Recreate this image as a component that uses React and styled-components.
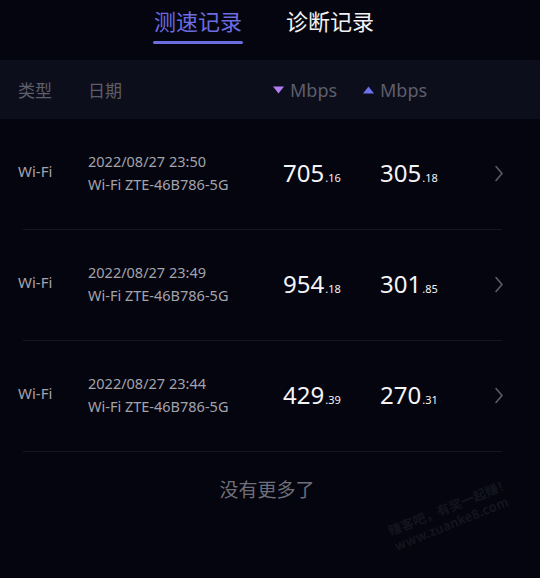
import React from 'react';
import styled, { createGlobalStyle } from 'styled-components';

const Global = createGlobalStyle`
  html, body { margin: 0; padding: 0; background: #05050f; }
  body { font-family: "Noto Sans", "Noto Sans CJK SC", sans-serif; }
`;

const Page = styled.div`
  position: relative;
  width: 540px;
  height: 578px;
  overflow: hidden;
  background: #05050f;
`;

const Tabs = styled.div`
  height: 60px;
  display: flex;
  justify-content: center;
  gap: 44px;
  padding-right: 12px;
`;

const Tab = styled.div`
  position: relative;
  padding-top: 4px;
  font-size: 22px;
  line-height: 32px;
  color: ${p => (p.active ? '#6a6ce0' : '#f2f2f5')};
  font-family: "Noto Sans CJK SC", sans-serif;
  &::after {
    content: '';
    display: ${p => (p.active ? 'block' : 'none')};
    position: absolute;
    left: -1px;
    right: -1px;
    top: 41px;
    height: 3px;
    border-radius: 2px;
    background: #6a6ce0;
  }
`;

const HeaderBand = styled.div`
  height: 59px;
  background: #0d0e1b;
  display: grid;
  grid-template-columns: 70px 185px 90px 1fr;
  align-items: center;
  padding-left: 18px;
  color: #5d5e6a;
  font-size: 17px;
`;

const HeadCell = styled.div`
  display: flex;
  align-items: center;
  gap: 6px;
  font-family: ${p => (p.cjk ? '"Noto Sans CJK SC", sans-serif' : '"Noto Sans", sans-serif')};
  font-size: ${p => (p.cjk ? '17px' : '18px')};
`;

const Tri = styled.svg`
  width: 11px;
  height: 8px;
`;

const Row = styled.div`
  position: relative;
  height: 111px;
  display: grid;
  grid-template-columns: 70px 195px 97px 1fr 46px;
  align-items: center;
  padding-left: 18px;
  &::after {
    content: '';
    position: absolute;
    left: 23px;
    right: 38px;
    bottom: 0;
    height: 1px;
    background: #151623;
  }
`;

const TypeText = styled.div`
  color: #a2a3ab;
  font-size: 15px;
  padding-bottom: 7px;
`;

const DateBlock = styled.div`
  display: flex;
  flex-direction: column;
  gap: 2px;
  color: #a2a3ab;
  font-size: 14.5px;
  line-height: 21px;
  padding-bottom: 3px;
`;

const Speed = styled.div`
  color: #f4f4f7;
  font-size: 24px;
  line-height: 30px;
  padding-top: 2px;
`;

const Dec = styled.span`
  font-size: 11px;
  margin-left: 1px;
`;

const Chevron = styled.svg`
  width: 10px;
  height: 17px;
  margin-bottom: 2px;
`;

const Footer = styled.div`
  text-align: center;
  padding-top: 23px;
  padding-right: 6px;
  color: #6e6f79;
  font-size: 19px;
  font-family: "Noto Sans CJK SC", sans-serif;
`;

const Watermark = styled.div`
  position: absolute;
  left: 386px;
  top: 524px;
  transform: rotate(-22deg);
  transform-origin: left top;
  color: rgba(120, 120, 135, 0.14);
  font-size: 13px;
  font-weight: 700;
  line-height: 16px;
  font-family: "Noto Sans CJK SC", sans-serif;
`;

const records = [
  { date: '2022/08/27 23:50', down: ['705', '16'], up: ['305', '18'] },
  { date: '2022/08/27 23:49', down: ['954', '18'], up: ['301', '85'] },
  { date: '2022/08/27 23:44', down: ['429', '39'], up: ['270', '31'] },
];

export default function App() {
  return (
    <Page>
      <Global />
      <Tabs>
        <Tab active>测速记录</Tab>
        <Tab>诊断记录</Tab>
      </Tabs>
      <HeaderBand>
        <HeadCell cjk>类型</HeadCell>
        <HeadCell cjk>日期</HeadCell>
        <HeadCell>
          <Tri viewBox="0 0 11 8"><path d="M0 0.5h11L5.5 7.5z" fill="#b27cf2" /></Tri>
          Mbps
        </HeadCell>
        <HeadCell>
          <Tri viewBox="0 0 11 8"><path d="M0 7.5h11L5.5 0.5z" fill="#6e70f0" /></Tri>
          Mbps
        </HeadCell>
      </HeaderBand>
      {records.map((r, i) => (
        <Row key={i}>
          <TypeText>Wi-Fi</TypeText>
          <DateBlock>
            <span>{r.date}</span>
            <span>Wi-Fi ZTE-46B786-5G</span>
          </DateBlock>
          <Speed>{r.down[0]}<Dec>.{r.down[1]}</Dec></Speed>
          <Speed>{r.up[0]}<Dec>.{r.up[1]}</Dec></Speed>
          <Chevron viewBox="0 0 10 17">
            <path d="M2 1.5l6 7-6 7" stroke="#5b5c66" strokeWidth="1.6" fill="none" strokeLinecap="round" strokeLinejoin="round" />
          </Chevron>
        </Row>
      ))}
      <Footer>没有更多了</Footer>
      <Watermark>
        赚客吧，有奖一起赚！<br />www.zuanke8.com
      </Watermark>
    </Page>
  );
}
